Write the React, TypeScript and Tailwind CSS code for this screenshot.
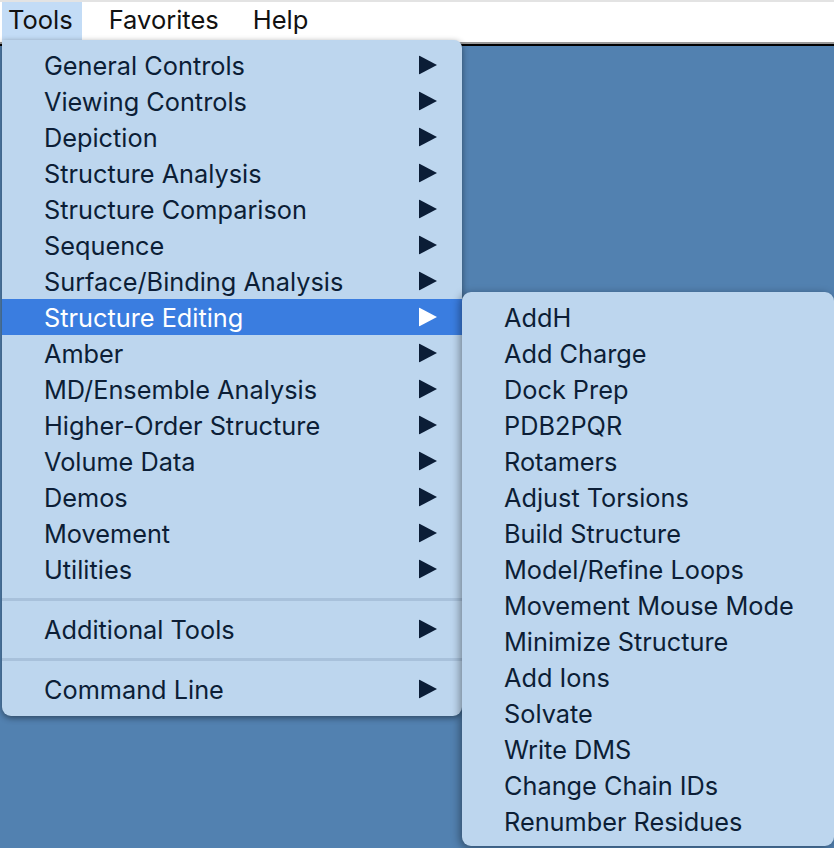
import React from 'react';

const mainItems = [
  'General Controls',
  'Viewing Controls',
  'Depiction',
  'Structure Analysis',
  'Structure Comparison',
  'Sequence',
  'Surface/Binding Analysis',
  'Structure Editing',
  'Amber',
  'MD/Ensemble Analysis',
  'Higher-Order Structure',
  'Volume Data',
  'Demos',
  'Movement',
  'Utilities',
];

const editingItems = [
  'AddH',
  'Add Charge',
  'Dock Prep',
  'PDB2PQR',
  'Rotamers',
  'Adjust Torsions',
  'Build Structure',
  'Model/Refine Loops',
  'Movement Mouse Mode',
  'Minimize Structure',
  'Add Ions',
  'Solvate',
  'Write DMS',
  'Change Chain IDs',
  'Renumber Residues',
];

const Arrow = ({ active }: { active?: boolean }) => (
  <svg width="18" height="19" viewBox="0 0 18 19" className="absolute left-[417px] top-1/2 -translate-y-1/2">
    <path d="M0 0 L18 9.5 L0 19 Z" fill={active ? '#ffffff' : '#0b1d36'} />
  </svg>
);

const MenuItem = ({ label, active }: { label: string; active?: boolean }) => (
  <div
    className={`relative flex h-[36px] items-center pl-[42px] pt-[1px] ${
      active ? 'bg-[#3a7de0] text-white' : 'text-[#0c1e36]'
    }`}
  >
    <span>{label}</span>
    <Arrow active={active} />
  </div>
);

const Separator = () => (
  <div className="pb-[10px] pt-[11px]">
    <div className="h-[3px] bg-[#a8c1db]" />
  </div>
);

export default function App() {
  return (
    <div
      className="relative flex h-[848px] w-[834px] flex-col overflow-hidden bg-[#5281b0]"
      style={{ fontFamily: 'Inter, "Liberation Sans", sans-serif' }}
    >
      {/* Menu bar */}
      <div className="flex h-[46px] flex-col bg-white">
        <div className="h-[2px] bg-[#e3e3e3]" />
        <div className="flex h-[40px] items-center text-[25.5px] text-[#111]">
          <div className="ml-[2px] flex h-full items-center bg-[#c3dcf6] pb-[3px] pl-[6px] pr-[9px]">Tools</div>
          <div className="ml-[27px] flex h-full items-center pb-[3px]">Favorites</div>
          <div className="ml-[34px] flex h-full items-center pb-[3px]">Help</div>
        </div>
        <div className="h-[2px] bg-[#9a9a9a]" />
        <div className="h-[2px] bg-black" />
      </div>

      {/* Desktop */}
      <div className="flex-1 bg-[#5281b0]" />

      {/* Tools menu */}
      <div className="absolute left-[2px] top-[40px] w-[460px] rounded-b-[9px] rounded-tr-[8px] bg-[#bdd6ee] pb-[9px] pt-[7px] text-[25.3px] shadow-[0_2px_6px_rgba(0,0,0,0.45)]">
        {mainItems.map((label) => (
          <MenuItem key={label} label={label} active={label === 'Structure Editing'} />
        ))}
        <Separator />
        <MenuItem label="Additional Tools" />
        <Separator />
        <MenuItem label="Command Line" />
      </div>

      {/* Structure Editing submenu */}
      <div className="absolute left-[462px] top-[292px] w-[372px] rounded-[9px] bg-[#bdd6ee] py-[7px] text-[25.3px] text-[#0c1e36] shadow-[-2px_2px_8px_rgba(0,0,0,0.4)]">
        {editingItems.map((label) => (
          <div key={label} className="flex h-[36px] items-center pl-[42px] pt-[1px]">
            {label}
          </div>
        ))}
      </div>
    </div>
  );
}
